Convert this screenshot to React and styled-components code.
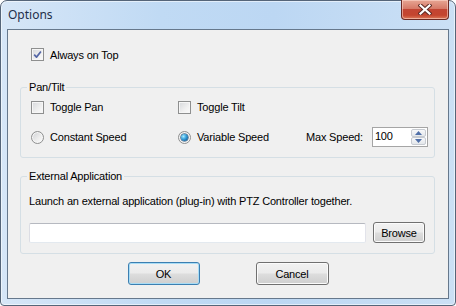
import React from 'react';
import styled, { createGlobalStyle, css } from 'styled-components';

const GlobalStyle = createGlobalStyle`
  html, body {
    margin: 0;
    padding: 0;
    background: #ffffff;
  }
  body {
    font-family: "Liberation Sans", Arial, sans-serif;
    font-size: 11px;
    letter-spacing: -0.18px;
    color: #000;
  }
`;

const Window = styled.div`
  box-sizing: border-box;
  width: 456px;
  height: 306px;
  border: 1px solid #556579;
  border-radius: 7px 7px 4px 4px;
  background: linear-gradient(90deg, #d6e6f7 0%, #c0daf4 35%, #bcd7f3 60%, #cbe0f5 100%);
  padding: 0 6px 6px 6px;
  display: flex;
  flex-direction: column;
  box-shadow: inset 0 0 0 1px rgba(255, 255, 255, 0.55);
`;

const TitleBar = styled.div`
  height: 28px;
  display: flex;
  align-items: flex-start;
  justify-content: space-between;
`;

const Title = styled.div`
  font-family: "Noto Sans", "Open Sans", sans-serif;
  font-size: 12px;
  letter-spacing: 0;
  color: #1e2f4a;
  padding: 5px 0 0 1px;
`;

const CloseButton = styled.div`
  width: 46px;
  height: 19px;
  margin-top: -1px;
  border: 1px solid #6b2a24;
  border-top: none;
  border-radius: 0 0 4px 4px;
  background: linear-gradient(#e7a694 0%, #d67a68 45%, #c24533 50%, #c4452f 80%, #dc7a5a 100%);
  box-shadow: inset 0 0 0 1px rgba(255, 220, 210, 0.55);
  display: flex;
  align-items: center;
  justify-content: center;
`;

const Client = styled.div`
  flex: 1;
  border: 1px solid #66788c;
  background: #f0f0f0;
  display: flex;
  flex-direction: column;
  padding: 18px 13px 0 12px;
`;

const Row = styled.div`
  display: flex;
  align-items: center;
  height: ${p => p.h || 13}px;
  padding-left: ${p => p.indent || 0}px;
`;

const Group = styled.fieldset`
  margin: ${p => p.mt}px 0 0 0;
  padding: 0;
  border: 1px solid #d5dfe5;
  border-radius: 3px;
  min-inline-size: 0;
`;

const Legend = styled.legend`
  padding: 0 2px;
  margin-left: 6px;
  line-height: 13px;
  height: 13px;
  color: #000;
`;

const PanGrid = styled.div`
  display: grid;
  grid-template-columns: 147px 127px auto;
  grid-auto-rows: 20px;
  row-gap: 10px;
  align-items: center;
  padding: 3px 0 10px 10px;
`;

const ExtBody = styled.div`
  display: flex;
  flex-direction: column;
  padding: 12px 9px 10px 8px;
`;

const Item = styled.label`
  display: flex;
  align-items: center;
  gap: 6px;
  white-space: nowrap;
`;

const boxBase = css`
  box-sizing: border-box;
  width: 13px;
  height: 13px;
  border: 1px solid #8e8f8f;
  background: linear-gradient(135deg, #d6d8db 0%, #f0f0f0 60%, #fbfbfb 100%);
  box-shadow: inset 0 0 0 1px #f6f6f6;
  flex: none;
  display: flex;
  align-items: center;
  justify-content: center;
`;

const CheckBox = styled.span`
  ${boxBase}
`;

const RadioBox = styled.span`
  ${boxBase}
  border-radius: 50%;
  background: linear-gradient(135deg, #cfd1d4 0%, #eeeeee 60%, #fdfdfd 100%);
`;

const RadioDot = styled.span`
  width: 7px;
  height: 7px;
  border-radius: 50%;
  background: radial-gradient(circle at 35% 35%, #a9ecff 0%, #3ba4de 40%, #1767a3 75%, #0f4671 100%);
  box-shadow: 0 0 0 0.5px #173f62;
`;

const SpeedLabel = styled.div`
  display: flex;
  align-items: center;
  gap: 9px;
  padding-left: 1px;
`;

const Spinner = styled.div`
  box-sizing: border-box;
  width: 56px;
  height: 20px;
  border: 1px solid #a5a5a5;
  background: #fff;
  display: flex;
  align-items: stretch;
  padding: 1px;
`;

const SpinValue = styled.div`
  flex: 1;
  padding: 0 0 0 1px;
  line-height: 14px;
`;

const SpinButtons = styled.div`
  width: 15px;
  display: flex;
  flex-direction: column;
`;

const SpinButton = styled.div`
  flex: 1;
  box-sizing: border-box;
  border: 1px solid #c7cbd1;
  border-radius: 2px;
  background: linear-gradient(#f7f8fa, #e4e7eb);
  display: flex;
  align-items: center;
  justify-content: center;
`;

const Description = styled.div`
  line-height: 13px;
`;

const InputRow = styled.div`
  display: flex;
  align-items: center;
  gap: 7px;
  margin-top: 14px;
`;

const TextInput = styled.div`
  box-sizing: border-box;
  flex: 1;
  height: 20px;
  background: #fff;
  border: 1px solid;
  border-color: #b6b9c0 #e2e3ea #e3e9ef #dcdde4;
  border-radius: 2px;
`;

const Button = styled.button`
  box-sizing: border-box;
  width: ${p => p.w}px;
  height: ${p => p.h}px;
  padding: 0;
  font-family: "Liberation Sans", Arial, sans-serif;
  font-size: 11px;
  letter-spacing: -0.18px;
  color: #000;
  border: 1px solid ${p => (p.primary ? '#3c7fb1' : '#707070')};
  border-radius: 3px;
  background: linear-gradient(#f2f2f2 0%, #ebebeb 48%, #dddddd 52%, #cfcfcf 100%);
  box-shadow: inset 0 0 0 1px ${p => (p.primary ? '#a8dcf5' : '#fbfbfb')};
`;

const ButtonBar = styled.div`
  display: flex;
  justify-content: center;
  gap: 56px;
  margin-top: 8px;
  padding-left: 1px;
`;

const Check = () => (
  <svg width="9" height="9" viewBox="0 0 9 9">
    <path d="M1.2 4.6 L3.5 7.1 L7.9 1.5" fill="none" stroke="#5466a6" strokeWidth="1.7" strokeLinejoin="round" />
  </svg>
);

const Arrow = ({ up }) => (
  <svg width="7" height="4" viewBox="0 0 7 4">
    <path d={up ? 'M0 4 L3.5 0 L7 4 Z' : 'M0 0 L3.5 4 L7 0 Z'} fill="#4f6fa8" />
  </svg>
);

const CloseGlyph = () => (
  <svg width="14" height="11" viewBox="0 0 14 11">
    <path d="M2.5 1.5 L11.5 9.5 M11.5 1.5 L2.5 9.5" stroke="#5e2b25" strokeWidth="4.2" strokeLinecap="square" />
    <path d="M2.5 1.5 L11.5 9.5 M11.5 1.5 L2.5 9.5" stroke="#ffffff" strokeWidth="2.2" strokeLinecap="square" />
  </svg>
);

function Checkbox({ checked, children }) {
  return (
    <Item>
      <CheckBox>{checked && <Check />}</CheckBox>
      {children}
    </Item>
  );
}

function Radio({ checked, children }) {
  return (
    <Item>
      <RadioBox>{checked && <RadioDot />}</RadioBox>
      {children}
    </Item>
  );
}

export default function App() {
  return (
    <>
      <GlobalStyle />
      <Window>
        <TitleBar>
          <Title>Options</Title>
          <CloseButton>
            <CloseGlyph />
          </CloseButton>
        </TitleBar>
        <Client>
          <Row indent={11}>
            <Checkbox checked>Always on Top</Checkbox>
          </Row>

          <Group mt={20}>
            <Legend>Pan/Tilt</Legend>
            <PanGrid>
              <Checkbox>Toggle Pan</Checkbox>
              <Checkbox>Toggle Tilt</Checkbox>
              <span />
              <Radio>Constant Speed</Radio>
              <Radio checked>Variable Speed</Radio>
              <SpeedLabel>
                Max Speed:
                <Spinner>
                  <SpinValue>100</SpinValue>
                  <SpinButtons>
                    <SpinButton><Arrow up /></SpinButton>
                    <SpinButton><Arrow /></SpinButton>
                  </SpinButtons>
                </Spinner>
              </SpeedLabel>
            </PanGrid>
          </Group>

          <Group mt={12}>
            <Legend>External Application</Legend>
            <ExtBody>
              <Description>Launch an external application (plug-in) with PTZ Controller together.</Description>
              <InputRow>
                <TextInput />
                <Button w={52} h={21}>Browse</Button>
              </InputRow>
            </ExtBody>
          </Group>

          <ButtonBar>
            <Button primary w={72} h={23}>OK</Button>
            <Button w={73} h={23}>Cancel</Button>
          </ButtonBar>
        </Client>
      </Window>
    </>
  );
}
